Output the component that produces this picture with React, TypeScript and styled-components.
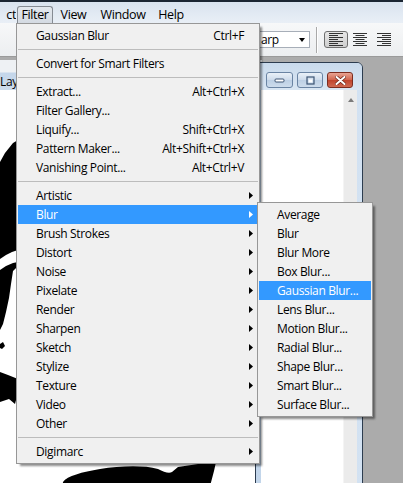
import React from "react";
import styled, { createGlobalStyle } from "styled-components";

const FONT = `"Open Sans", "Noto Sans", "Liberation Sans", sans-serif`;

const GlobalStyle = createGlobalStyle`
  html, body { margin: 0; padding: 0; background: #ababab; overflow: hidden; }
  body { font-family: ${FONT}; }
`;

const Screen = styled.div`
  position: relative;
  width: 403px;
  height: 483px;
  overflow: hidden;
  display: flex;
  flex-direction: column;
  background: #ababab;
  font-family: ${FONT};
  font-size: 12px;
  letter-spacing: -0.35px;
  color: #000;
`;

const TopStrip = styled.div`
  flex: none;
  height: 2px;
  background: #1b2633;
`;

const MenuBar = styled.div`
  flex: none;
  height: 21px;
  display: flex;
  align-items: flex-end;
  background: linear-gradient(#d9e3ef, #e9eff6);
`;

const MenuBarItem = styled.div<{ $w: number; $open?: boolean; $align?: string }>`
  box-sizing: border-box;
  width: ${(p) => p.$w}px;
  height: 17px;
  line-height: 16px;
  display: flex;
  justify-content: ${(p) => p.$align || "center"};
  white-space: nowrap;
  overflow: hidden;
  font-size: 12.5px;
  border: 1px solid ${(p) => (p.$open ? "#858b93" : "transparent")};
  border-bottom: none;
  border-radius: 3px 3px 0 0;
  background: ${(p) => (p.$open ? "linear-gradient(#e3e8ee, #d4dae2)" : "transparent")};
`;

const OptionsBar = styled.div`
  flex: none;
  height: 34px;
  display: flex;
  align-items: center;
  justify-content: flex-end;
  padding-right: 7px;
  background: linear-gradient(#f7f8f9, #eceef0);
  border-bottom: 1px solid #9a9a9a;
  box-sizing: border-box;
`;

const Dropdown = styled.div`
  box-sizing: border-box;
  width: 52px;
  height: 17px;
  background: #fff;
  border: 1px solid #a7aeb8;
  display: flex;
  align-items: center;
  justify-content: space-between;
  padding: 0 4px 0 2px;
  line-height: 15px;
`;

const Caret = styled.span`
  width: 0;
  height: 0;
  border-left: 3px solid transparent;
  border-right: 3px solid transparent;
  border-top: 4px solid #000;
`;

const Divider = styled.div`
  width: 1px;
  height: 26px;
  margin: 0 6px;
  background: #a9a9a9;
  border-right: 1px solid #fff;
`;

const AlignButton = styled.div<{ $pressed?: boolean }>`
  box-sizing: border-box;
  width: 24px;
  height: 17px;
  display: flex;
  align-items: center;
  justify-content: center;
  border-radius: 3px;
  border: 1px solid ${(p) => (p.$pressed ? "#6e6e6e" : "transparent")};
  background: ${(p) => (p.$pressed ? "linear-gradient(#e6e6e6, #cfcfcf)" : "transparent")};
`;

const Workspace = styled.div`
  flex: 1;
  position: relative;
  background: #ababab;
`;

const LeftDoc = styled.div`
  position: absolute;
  left: 0;
  top: 3px;
  width: 262px;
  bottom: -20px;
  display: flex;
  flex-direction: column;
  background: #fff;
`;

const LeftDocTitle = styled.div`
  flex: none;
  height: 30px;
  box-sizing: border-box;
  padding: 14px 0 0 0;
  line-height: 16px;
  background: linear-gradient(#eef1f4 0, #eef1f4 12px, #c4d6ea 13px, #cbdbec 30px);
  white-space: nowrap;
`;

const DocCanvas = styled.div`
  flex: 1;
  background: #fff;
`;

const RightDoc = styled.div`
  position: absolute;
  left: 255px;
  top: 5px;
  width: 108px;
  bottom: -20px;
  box-sizing: border-box;
  border: 1px solid #2c3c4f;
  border-radius: 6px 6px 0 0;
  display: flex;
  flex-direction: column;
  background: linear-gradient(90deg, #c2d5ea, #d3e2f2);
`;

const TitleBar = styled.div`
  flex: none;
  height: 27px;
  box-sizing: border-box;
  display: flex;
  justify-content: flex-end;
  align-items: flex-start;
  gap: 4px;
  padding: 9px 9px 0 0;
  background: linear-gradient(#c9daec, #d9e6f3);
  border-radius: 5px 5px 0 0;
`;

const CaptionButton = styled.div<{ $w: number; $close?: boolean }>`
  box-sizing: border-box;
  width: ${(p) => p.$w}px;
  height: 16px;
  border-radius: 3px;
  display: flex;
  align-items: center;
  justify-content: center;
  border: 1px solid ${(p) => (p.$close ? "#7c2d20" : "#6a84a3")};
  background: ${(p) =>
    p.$close
      ? "linear-gradient(#e9a493, #d0644c 50%, #c0432c 51%, #cf6a52)"
      : "linear-gradient(#eaf1f8, #cddbeb 50%, #bccfe4 51%, #cddcec)"};
`;

const DocBody = styled.div`
  flex: 1;
  display: flex;
  padding: 0 5px;
`;

const Client = styled.div`
  flex: 1;
  background: #fff;
`;

const ScrollBar = styled.div`
  flex: none;
  width: 14px;
  background: #ebebeb;
  border-left: 1px solid #f4f4f4;
  display: flex;
  justify-content: center;
  padding-top: 8px;
  box-sizing: border-box;
`;

const UpArrow = styled.span`
  width: 0;
  height: 0;
  border-left: 3px solid transparent;
  border-right: 3px solid transparent;
  border-bottom: 4px solid #7b7b7b;
`;

const Menu = styled.div<{ $left: number; $top: number; $w: number }>`
  position: absolute;
  left: ${(p) => p.$left}px;
  top: ${(p) => p.$top}px;
  width: ${(p) => p.$w}px;
  box-sizing: border-box;
  padding: 2px 0;
  background: #f0f0f0;
  border: 1px solid #979797;
  box-shadow: 3px 3px 2px -1px rgba(0, 0, 0, 0.45);
`;

const Row = styled.div<{ $active?: boolean }>`
  height: 19px;
  margin: 0 1px;
  padding-left: 18px;
  display: grid;
  grid-template-columns: 1fr auto 14px;
  align-items: center;
  line-height: 19px;
  white-space: nowrap;
  color: ${(p) => (p.$active ? "#fff" : "#000")};
  background: ${(p) => (p.$active ? "#3399ff" : "transparent")};
`;

const Shortcut = styled.span`
  text-align: right;
`;

const ArrowCell = styled.span`
  display: flex;
  align-items: center;
  padding-left: 5px;
`;

const Separator = styled.div`
  height: 9px;
  margin: 0 1px;
  display: flex;
  align-items: center;
  &::after {
    content: "";
    display: block;
    width: 100%;
    height: 1px;
    background: #bcbcbc;
  }
`;

type Item =
  | { sep: true }
  | { label: string; shortcut?: string; sub?: boolean; active?: boolean };

const mainItems: Item[] = [
  { label: "Gaussian Blur", shortcut: "Ctrl+F" },
  { sep: true },
  { label: "Convert for Smart Filters" },
  { sep: true },
  { label: "Extract...", shortcut: "Alt+Ctrl+X" },
  { label: "Filter Gallery..." },
  { label: "Liquify...", shortcut: "Shift+Ctrl+X" },
  { label: "Pattern Maker...", shortcut: "Alt+Shift+Ctrl+X" },
  { label: "Vanishing Point...", shortcut: "Alt+Ctrl+V" },
  { sep: true },
  { label: "Artistic", sub: true },
  { label: "Blur", sub: true, active: true },
  { label: "Brush Strokes", sub: true },
  { label: "Distort", sub: true },
  { label: "Noise", sub: true },
  { label: "Pixelate", sub: true },
  { label: "Render", sub: true },
  { label: "Sharpen", sub: true },
  { label: "Sketch", sub: true },
  { label: "Stylize", sub: true },
  { label: "Texture", sub: true },
  { label: "Video", sub: true },
  { label: "Other", sub: true },
  { sep: true },
  { label: "Digimarc", sub: true },
];

const blurItems: Item[] = [
  { label: "Average" },
  { label: "Blur" },
  { label: "Blur More" },
  { label: "Box Blur..." },
  { label: "Gaussian Blur...", active: true },
  { label: "Lens Blur..." },
  { label: "Motion Blur..." },
  { label: "Radial Blur..." },
  { label: "Shape Blur..." },
  { label: "Smart Blur..." },
  { label: "Surface Blur..." },
];

const SubArrow = () => (
  <svg width="4" height="7" viewBox="0 0 4 7">
    <polygon points="0,0 4,3.5 0,7" fill="currentColor" />
  </svg>
);

const MenuList = ({ items }: { items: Item[] }) => (
  <>
    {items.map((it, i) =>
      "sep" in it ? (
        <Separator key={i} />
      ) : (
        <Row key={i} $active={it.active}>
          <span>{it.label}</span>
          <Shortcut>{it.shortcut || ""}</Shortcut>
          <ArrowCell>{it.sub ? <SubArrow /> : null}</ArrowCell>
        </Row>
      )
    )}
  </>
);

const AlignIcon = ({ mode }: { mode: "left" | "center" | "right" }) => {
  const lines = [14, 9, 14, 9, 14, 9, 14];
  return (
    <svg width="14" height="14" viewBox="0 0 14 14">
      {lines.map((w, i) => {
        const x = mode === "left" ? 0 : mode === "right" ? 14 - w : (14 - w) / 2;
        return <rect key={i} x={x} y={i * 2} width={w} height={1} fill="#333" />;
      })}
    </svg>
  );
};

const MinGlyph = () => (
  <svg width="11" height="6" viewBox="0 0 11 6">
    <rect x="1" y="2" width="9" height="3" rx="1" fill="#fff" stroke="#3d5574" strokeWidth="1" />
  </svg>
);

const MaxGlyph = () => (
  <svg width="9" height="9" viewBox="0 0 9 9">
    <rect x="1" y="1" width="7" height="7" fill="none" stroke="#3d5574" strokeWidth="1.2" />
    <rect x="2.5" y="3.5" width="4" height="3" fill="#fff" />
  </svg>
);

const CloseGlyph = () => (
  <svg width="11" height="9" viewBox="0 0 11 9">
    <path d="M1.5 1 L9.5 8 M9.5 1 L1.5 8" stroke="#6b2418" strokeWidth="3.4" strokeLinecap="round" />
    <path d="M1.5 1 L9.5 8 M9.5 1 L1.5 8" stroke="#fff" strokeWidth="2" strokeLinecap="round" />
  </svg>
);

const DocImage = () => (
  <svg width="262" height="400" viewBox="0 90 262 400" style={{ display: "block" }}>
    <path d="M0 162 L5 153 L9 148 L13 143 L18 140 L18 250 L12 252 L6 255 L0 259 Z" fill="#000" />
    <path d="M0 270 L6 266 L13 263 L18 262 L18 266 L13 271 L11 284 L9 298 L6 312 L3 324 L0 330 Z" fill="#000" />
    <path d="M0 344 L3 342 L5 346 L2 349 L0 348 Z" fill="#000" />
    <path d="M0 372 L8 375 L18 379 L18 392 L15 404 L9 399 L3 401 L0 402 Z" fill="#000" />
    <path d="M62 490 L63 482 C67 476 82 472 100 469 C120 466 143 465 158 469 C164 472 169 474 172 472 L178 467 L198 464 L216 462 L214 471 L209 490 Z" fill="#000" />
  </svg>
);

export default function App() {
  return (
    <>
      <GlobalStyle />
      <Screen>
        <TopStrip />
        <MenuBar>
          <MenuBarItem $w={17} $align="flex-end">ct</MenuBarItem>
          <MenuBarItem $w={36} $open>Filter</MenuBarItem>
          <MenuBarItem $w={41}>View</MenuBarItem>
          <MenuBarItem $w={58}>Window</MenuBarItem>
          <MenuBarItem $w={38}>Help</MenuBarItem>
        </MenuBar>
        <OptionsBar>
          <Dropdown>
            <span>arp</span>
            <Caret />
          </Dropdown>
          <Divider />
          <AlignButton $pressed>
            <AlignIcon mode="left" />
          </AlignButton>
          <AlignButton>
            <AlignIcon mode="center" />
          </AlignButton>
          <AlignButton>
            <AlignIcon mode="right" />
          </AlignButton>
        </OptionsBar>
        <Workspace>
          <LeftDoc>
            <LeftDocTitle>Lay</LeftDocTitle>
            <DocCanvas>
              <DocImage />
            </DocCanvas>
          </LeftDoc>
          <RightDoc>
            <TitleBar>
              <CaptionButton $w={27}>
                <MinGlyph />
              </CaptionButton>
              <CaptionButton $w={26}>
                <MaxGlyph />
              </CaptionButton>
              <CaptionButton $w={26} $close>
                <CloseGlyph />
              </CaptionButton>
            </TitleBar>
            <DocBody>
              <Client />
              <ScrollBar>
                <UpArrow />
              </ScrollBar>
            </DocBody>
          </RightDoc>
        </Workspace>
        <Menu $left={16} $top={23} $w={244}>
          <MenuList items={mainItems} />
        </Menu>
        <Menu $left={257} $top={202} $w={116}>
          <MenuList items={blurItems} />
        </Menu>
      </Screen>
    </>
  );
}
